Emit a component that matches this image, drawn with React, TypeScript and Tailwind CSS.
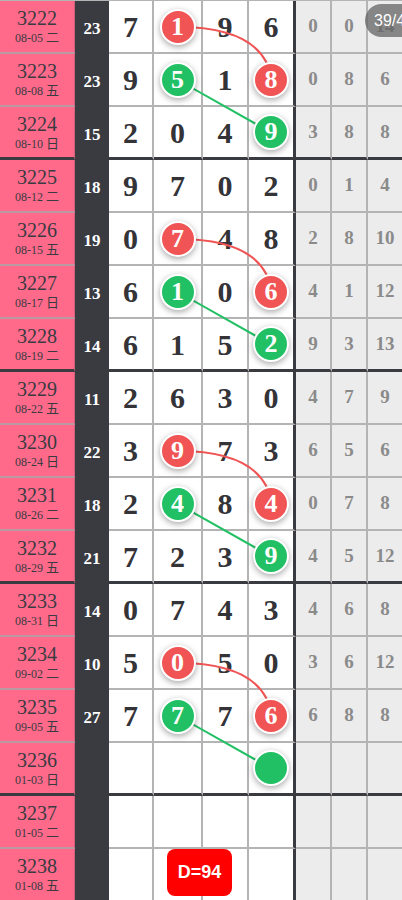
import React from "react";

type Row = {
  id: string;
  date: string;
  sum: string;
  cells: string[];
  tail: string[];
};

const rows: Row[] = [
  { id: "3222", date: "08-05 二", sum: "23", cells: ["7", "1r", "9", "6"], tail: ["0", "0", "14"] },
  { id: "3223", date: "08-08 五", sum: "23", cells: ["9", "5g", "1", "8r"], tail: ["0", "8", "6"] },
  { id: "3224", date: "08-10 日", sum: "15", cells: ["2", "0", "4", "9g"], tail: ["3", "8", "8"] },
  { id: "3225", date: "08-12 二", sum: "18", cells: ["9", "7", "0", "2"], tail: ["0", "1", "4"] },
  { id: "3226", date: "08-15 五", sum: "19", cells: ["0", "7r", "4", "8"], tail: ["2", "8", "10"] },
  { id: "3227", date: "08-17 日", sum: "13", cells: ["6", "1g", "0", "6r"], tail: ["4", "1", "12"] },
  { id: "3228", date: "08-19 二", sum: "14", cells: ["6", "1", "5", "2g"], tail: ["9", "3", "13"] },
  { id: "3229", date: "08-22 五", sum: "11", cells: ["2", "6", "3", "0"], tail: ["4", "7", "9"] },
  { id: "3230", date: "08-24 日", sum: "22", cells: ["3", "9r", "7", "3"], tail: ["6", "5", "6"] },
  { id: "3231", date: "08-26 二", sum: "18", cells: ["2", "4g", "8", "4r"], tail: ["0", "7", "8"] },
  { id: "3232", date: "08-29 五", sum: "21", cells: ["7", "2", "3", "9g"], tail: ["4", "5", "12"] },
  { id: "3233", date: "08-31 日", sum: "14", cells: ["0", "7", "4", "3"], tail: ["4", "6", "8"] },
  { id: "3234", date: "09-02 二", sum: "10", cells: ["5", "0r", "5", "0"], tail: ["3", "6", "12"] },
  { id: "3235", date: "09-05 五", sum: "27", cells: ["7", "7g", "7", "6r"], tail: ["6", "8", "8"] },
  { id: "3236", date: "01-03 日", sum: "", cells: ["", "", "", "g"], tail: ["", "", ""] },
  { id: "3237", date: "01-05 二", sum: "", cells: ["", "", "", ""], tail: ["", "", ""] },
  { id: "3238", date: "01-08 五", sum: "", cells: ["", "", "", ""], tail: ["", "", ""] },
];

const groupEnds = [2, 6, 10, 14];
const ROW_H = 53;
const X_FROM = 178;
const X_TO = 272;
const digitWidths = ["w-[45px]", "w-[49px]", "w-[46px]", "w-[47px]"];
const serif = "font-['Liberation_Serif','Times_New_Roman',serif]";

function Ball({ value, color }: { value: string; color: string }) {
  return (
    <div
      className={`relative z-10 flex h-[36px] w-[36px] items-center justify-center rounded-full border-2 border-white text-[26px] font-bold leading-none text-white shadow-[0_2px_6px_rgba(0,0,0,0.35)] ${
        color === "r" ? "bg-[#f05454]" : "bg-[#22c064]"
      }`}
    >
      {value}
    </div>
  );
}

function Links() {
  const items: React.ReactNode[] = [];
  rows.forEach((row, i) => {
    const next = rows[i + 1];
    const c = row.cells[1].slice(-1);
    if (!next || (c !== "r" && c !== "g")) return;
    if (next.cells[3].slice(-1) !== c) return;
    const y1 = ROW_H * i + 27;
    const y2 = ROW_H * (i + 1) + 27;
    if (c === "r") {
      items.push(
        <path
          key={i}
          d={`M ${X_FROM} ${y1} Q ${X_TO - 8} ${y1} ${X_TO} ${y2}`}
          fill="none"
          stroke="#f05454"
          strokeWidth="2"
        />
      );
    } else {
      items.push(
        <line key={i} x1={X_FROM} y1={y1} x2={X_TO} y2={y2} stroke="#22c064" strokeWidth="2" />
      );
    }
  });
  return (
    <svg className="pointer-events-none absolute left-0 top-0" width="402" height="900">
      {items}
    </svg>
  );
}

export default function App() {
  return (
    <div className={`relative h-[900px] w-[402px] overflow-hidden bg-white ${serif}`}>
      <div className="border-t border-[#b4b4b4]">
        {rows.map((row, i) => {
          const thick = groupEnds.includes(i);
          const bottom = thick
            ? "border-b-[3px] border-b-[#3a3a41]"
            : "border-b-2 border-b-[#b4b4b4]";
          return (
            <div key={row.id} className="flex h-[53px]">
              <div
                className={`flex w-[75px] shrink-0 flex-col items-center justify-center border-r border-r-[#d0607a] bg-[#ff6a8b] text-[#3a3a41] ${
                  thick ? "border-b-[3px] border-b-[#3a3a41]" : "border-b-2 border-b-[#b99aa2]"
                }`}
              >
                <span className="text-[20px] leading-[22px]">{row.id}</span>
                <span className="text-[12px] leading-[15px]">
                  {row.date.split(" ")[0]}{" "}
                  <span className="font-['Noto_Sans_CJK_SC',sans-serif] text-[13px]">
                    {row.date.split(" ")[1]}
                  </span>
                </span>
              </div>
              <div className="flex w-[34px] shrink-0 items-center justify-center bg-[#3a3a41] pt-[2px] text-[17px] font-bold text-white">
                {row.sum}
              </div>
              {row.cells.map((cell, j) => {
                const color = cell.slice(-1);
                const isBall = color === "r" || color === "g";
                const value = isBall ? cell.slice(0, -1) : cell;
                return (
                  <div
                    key={j}
                    className={`flex shrink-0 items-center justify-center bg-white text-[30px] font-bold text-[#333338] ${digitWidths[j]} ${bottom} ${
                      j === 3 ? "border-r-[3px] border-r-[#3a3a41]" : "border-r-2 border-r-[#b4b4b4]"
                    }`}
                  >
                    {isBall ? <Ball value={value} color={color} /> : value}
                  </div>
                );
              })}
              {row.tail.map((t, j) => (
                <div
                  key={j}
                  className={`flex w-[36px] shrink-0 items-center justify-center border-r-2 border-r-[#b4b4b4] bg-[#ececec] text-[19px] font-bold text-[#8a8a8a] ${bottom}`}
                >
                  {t}
                </div>
              ))}
            </div>
          );
        })}
      </div>

      <Links />

      <div className="absolute left-[365px] top-[4px] flex h-[33px] w-[60px] items-center rounded-full bg-[rgba(100,100,100,0.75)] pl-[9px] font-['Liberation_Sans',Arial,sans-serif] text-[16px] text-white">
        39/4
      </div>

      <div className="absolute left-[167px] top-[849px] flex h-[47px] w-[65px] items-center justify-center rounded-lg bg-[#ff0000] font-['Liberation_Sans',Arial,sans-serif] text-[18px] font-bold text-white">
        D=94
      </div>
    </div>
  );
}
